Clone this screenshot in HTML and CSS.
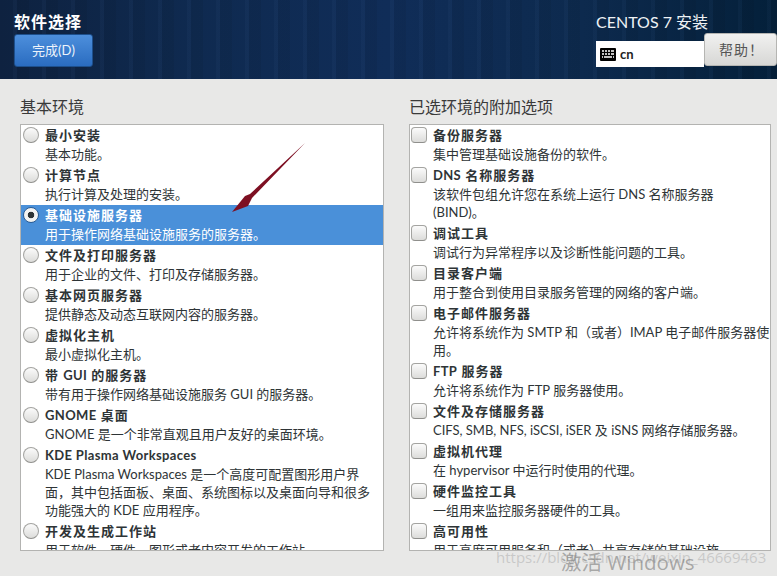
FILE: index.html
```html
<!DOCTYPE html>
<html lang="zh-CN">
<head>
<meta charset="utf-8">
<title>软件选择</title>
<link rel="stylesheet" href="styles.css">
</head>
<body>
<header class="top">
  <div class="top-left">
    <h1 class="spoke-title">软件选择</h1>
    <button class="done">完成(D)</button>
  </div>
  <div class="top-right">
    <div class="product">CENTOS 7 安装</div>
    <div class="kb-row">
      <div class="kb">
        <svg class="kb-icon" width="16" height="13" viewBox="0 0 16 13"><rect width="16" height="13" rx="1" fill="#000"/><path d="M2 3h2M5 3h2M8 3h2M11 3h3M2 6h2M5 6h2M8 6h2M11 6h3M2 9h1M4 9h8M13 9h1" stroke="#fff" stroke-width="1.4"/></svg>
        <span class="kb-text">cn</span>
      </div>
      <button class="help">帮助！</button>
    </div>
  </div>
</header>
<main class="content">
  <section class="col col-left">
    <h2 class="col-title">基本环境</h2>
    <div class="panel">
      <div class="row"><span class="radio"></span><div class="txt"><div class="name">最小安装</div><div class="desc">基本功能。</div></div></div>
      <div class="row"><span class="radio"></span><div class="txt"><div class="name">计算节点</div><div class="desc">执行计算及处理的安装。</div></div></div>
      <div class="row selected"><span class="radio on"></span><div class="txt"><div class="name">基础设施服务器</div><div class="desc">用于操作网络基础设施服务的服务器。</div></div></div>
      <div class="row"><span class="radio"></span><div class="txt"><div class="name">文件及打印服务器</div><div class="desc">用于企业的文件、打印及存储服务器。</div></div></div>
      <div class="row"><span class="radio"></span><div class="txt"><div class="name">基本网页服务器</div><div class="desc">提供静态及动态互联网内容的服务器。</div></div></div>
      <div class="row"><span class="radio"></span><div class="txt"><div class="name">虚拟化主机</div><div class="desc">最小虚拟化主机。</div></div></div>
      <div class="row"><span class="radio"></span><div class="txt"><div class="name">带 <span class="lat">GUI</span> 的服务器</div><div class="desc">带有用于操作网络基础设施服务 GUI 的服务器。</div></div></div>
      <div class="row"><span class="radio"></span><div class="txt"><div class="name"><span class="lat">GNOME</span> 桌面</div><div class="desc">GNOME 是一个非常直观且用户友好的桌面环境。</div></div></div>
      <div class="row"><span class="radio"></span><div class="txt"><div class="name"><span class="lat">KDE Plasma Workspaces</span></div><div class="desc">KDE Plasma Workspaces 是一个高度可配置图形用户界面，其中包括面板、桌面、系统图标以及桌面向导和很多功能强大的 KDE 应用程序。</div></div></div>
      <div class="row"><span class="radio"></span><div class="txt"><div class="name">开发及生成工作站</div><div class="desc">用于软件、硬件、图形或者内容开发的工作站。</div></div></div>
    </div>
  </section>
  <section class="col col-right">
    <h2 class="col-title">已选环境的附加选项</h2>
    <div class="panel">
      <div class="row"><span class="check"></span><div class="txt"><div class="name">备份服务器</div><div class="desc">集中管理基础设施备份的软件。</div></div></div>
      <div class="row"><span class="check"></span><div class="txt"><div class="name"><span class="lat">DNS</span> 名称服务器</div><div class="desc">该软件包组允许您在系统上运行 DNS 名称服务器<br>(BIND)。</div></div></div>
      <div class="row"><span class="check"></span><div class="txt"><div class="name">调试工具</div><div class="desc">调试行为异常程序以及诊断性能问题的工具。</div></div></div>
      <div class="row"><span class="check"></span><div class="txt"><div class="name">目录客户端</div><div class="desc">用于整合到使用目录服务管理的网络的客户端。</div></div></div>
      <div class="row"><span class="check"></span><div class="txt"><div class="name">电子邮件服务器</div><div class="desc">允许将系统作为 SMTP 和（或者）IMAP 电子邮件服务器使用。</div></div></div>
      <div class="row"><span class="check"></span><div class="txt"><div class="name"><span class="lat">FTP</span> 服务器</div><div class="desc">允许将系统作为 FTP 服务器使用。</div></div></div>
      <div class="row"><span class="check"></span><div class="txt"><div class="name">文件及存储服务器</div><div class="desc">CIFS, SMB, NFS, iSCSI, iSER 及 iSNS 网络存储服务器。</div></div></div>
      <div class="row"><span class="check"></span><div class="txt"><div class="name">虚拟机代理</div><div class="desc">在 hypervisor 中运行时使用的代理。</div></div></div>
      <div class="row"><span class="check"></span><div class="txt"><div class="name">硬件监控工具</div><div class="desc">一组用来监控服务器硬件的工具。</div></div></div>
      <div class="row"><span class="check"></span><div class="txt"><div class="name">高可用性</div><div class="desc">用于高度可用服务和（或者）共享存储的基础设施。</div></div></div>
    </div>
  </section>
</main>
<svg class="arrow" width="90" height="84" viewBox="0 0 90 84"><path d="M80 4 L25 55 L20 57 L7 73 L23 67 L27 59 Z" fill="#7d0f22"/></svg>
<div class="wm wm-url">https://blog.csdn.net/weixin_46669463</div>
<div class="wm wm-win">激活 Windows</div>
</body>
</html>
```
FILE: styles.css
```css
* { box-sizing: border-box; }
html, body { margin: 0; padding: 0; }
body {
  width: 777px;
  height: 576px;
  overflow: hidden;
  position: relative;
  background: #e8e8e7;
  color: #2e3436;
  font-family: Lato, "Noto Sans CJK SC", sans-serif;
}
.top {
  height: 79px;
  display: flex;
  justify-content: space-between;
  background:
    repeating-linear-gradient(90deg, rgba(255,255,255,0) 0 13px, rgba(120,160,220,0.04) 13px 17px, rgba(0,0,0,0.06) 17px 29px),
    linear-gradient(90deg, #0e2240 0%, #0f2a50 25%, #102d58 50%, #0d2a4e 75%, #04203a 100%);
}
.top-left { padding: 12px 0 0 14px; }
.spoke-title {
  margin: 0 0 3px;
  font-size: 16px;
  line-height: 19px;
  font-weight: 700;
  letter-spacing: 1px;
  color: #fff;
}
.done {
  display: block;
  width: 79px;
  height: 33px;
  padding: 0;
  border: 1px solid #1d4f8c;
  border-radius: 3px;
  background: linear-gradient(#4d8fdc, #2a6cc0);
  color: #eef4fb;
  font: 13px/1 Lato, "Noto Sans CJK SC", sans-serif;
}
.top-right { width: 181px; padding-top: 12px; }
.product {
  font-size: 16px;
  line-height: 20px;
  color: #eef2f5;
}
.kb-row { display: flex; margin-top: 9px; height: 26px; }
.kb {
  width: 108px;
  height: 26px;
  background: #fff;
  display: flex;
  align-items: center;
  gap: 4px;
  padding-left: 4px;
}
.kb-text { font-size: 13px; font-weight: 700; color: #222; }
.help {
  width: 73px;
  height: 33px;
  margin-top: -8px;
  flex: none;
  padding: 0 0 0 2px;
  border: 1px solid #b5b5b2;
  border-radius: 3px;
  background: linear-gradient(#f1f1f0, #d7d7d5);
  color: #555;
  letter-spacing: 1px;
  font-family: Lato, "Noto Sans CJK SC", sans-serif;
  font-size: 14px;
  line-height: 1;
}
.content {
  display: flex;
  gap: 25px;
  padding: 18px 0 0 20px;
}
.col { display: flex; flex-direction: column; }
.col-left { width: 364px; }
.col-right { width: 362px; }
.col-title {
  margin: 0 0 7px;
  height: 20px;
  font-size: 16px;
  line-height: 20px;
  font-weight: 400;
  color: #3a3a3a;
}
.panel {
  height: 427px;
  overflow: hidden;
  background: #fff;
  border: 1px solid #b3b3b1;
}
.row {
  display: flex;
  min-height: 40px;
  padding: 0 0 2px 1px;
}
.row.selected { background: #4a90d9; color: #fff; }
.txt { min-width: 0; }
.col-left .txt { padding-left: 6px; }
.col-right .txt { padding-left: 5px; }
.radio, .check {
  flex: none;
  display: block;
  margin-top: 2px;
  width: 16px;
  height: 16px;
  background: linear-gradient(#fbfbfb, #dcdcda);
  border: 1px solid #a4a4a1;
  border-bottom-color: #8f8f8c;
}
.radio { border-radius: 50%; margin-left: 1px; }
.radio.on {
  background: radial-gradient(circle, #2e3436 0 3px, #f3f3f2 3.6px);
  border-color: #2b5d95;
}
.check { border-radius: 4px; margin-right: 1px; }
.name {
  font-size: 13px;
  line-height: 20px;
  font-weight: 700;
  letter-spacing: 1px;
}
.lat { letter-spacing: 0.35px; }
.desc { font-size: 13px; line-height: 18px; }
.col-left .row { padding-right: 4px; }
.arrow {
  position: absolute;
  left: 225px;
  top: 139px;
}
.wm {
  position: absolute;
  white-space: nowrap;
  pointer-events: none;
  font-family: "Open Sans", "Noto Sans CJK SC", sans-serif;
}
.wm-url {
  left: 496px;
  top: 547px;
  font-size: 15px;
  color: rgba(190,190,190,0.75);
}
.wm-win {
  left: 561px;
  top: 546px;
  font-size: 20.5px;
  color: rgba(110,110,110,0.55);
}
```
